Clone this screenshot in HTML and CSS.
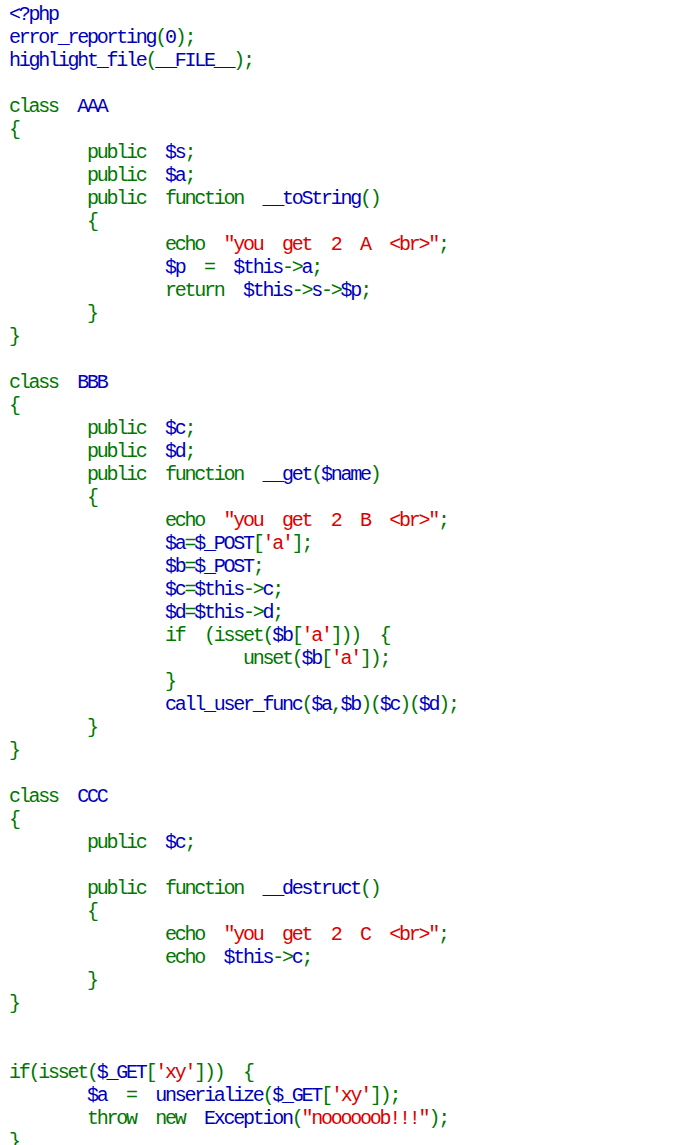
FILE: index.html
```html
<!DOCTYPE html>
<html>
<head>
<meta charset="utf-8">
<link rel="stylesheet" href="styles.css">
</head>
<body>
<pre class="code"><span class="d">&lt;?php</span>
<span class="d">error_reporting</span><span class="k">(</span><span class="d">0</span><span class="k">);</span>
<span class="d">highlight_file</span><span class="k">(</span><span class="d">__FILE__</span><span class="k">);</span>

<span class="k">class  </span><span class="d">AAA</span>
<span class="k">{</span>
<span class="k">        public  </span><span class="d">$s</span><span class="k">;</span>
<span class="k">        public  </span><span class="d">$a</span><span class="k">;</span>
<span class="k">        public  function  </span><span class="d">__toString</span><span class="k">()</span>
<span class="k">        {</span>
<span class="k">                echo  </span><span class="s">"you  get  2  A  &lt;br&gt;"</span><span class="k">;</span>
<span class="d">                $p  </span><span class="k">=  </span><span class="d">$this</span><span class="k">-&gt;</span><span class="d">a</span><span class="k">;</span>
<span class="k">                return  </span><span class="d">$this</span><span class="k">-&gt;</span><span class="d">s</span><span class="k">-&gt;</span><span class="d">$p</span><span class="k">;</span>
<span class="k">        }</span>
<span class="k">}</span>

<span class="k">class  </span><span class="d">BBB</span>
<span class="k">{</span>
<span class="k">        public  </span><span class="d">$c</span><span class="k">;</span>
<span class="k">        public  </span><span class="d">$d</span><span class="k">;</span>
<span class="k">        public  function  </span><span class="d">__get</span><span class="k">(</span><span class="d">$name</span><span class="k">)</span>
<span class="k">        {</span>
<span class="k">                echo  </span><span class="s">"you  get  2  B  &lt;br&gt;"</span><span class="k">;</span>
<span class="d">                $a</span><span class="k">=</span><span class="d">$_POST</span><span class="k">[</span><span class="s">'a'</span><span class="k">];</span>
<span class="d">                $b</span><span class="k">=</span><span class="d">$_POST</span><span class="k">;</span>
<span class="d">                $c</span><span class="k">=</span><span class="d">$this</span><span class="k">-&gt;</span><span class="d">c</span><span class="k">;</span>
<span class="d">                $d</span><span class="k">=</span><span class="d">$this</span><span class="k">-&gt;</span><span class="d">d</span><span class="k">;</span>
<span class="k">                if  (isset(</span><span class="d">$b</span><span class="k">[</span><span class="s">'a'</span><span class="k">]))  {</span>
<span class="k">                        unset(</span><span class="d">$b</span><span class="k">[</span><span class="s">'a'</span><span class="k">]);</span>
<span class="k">                }</span>
<span class="d">                call_user_func</span><span class="k">(</span><span class="d">$a</span><span class="k">,</span><span class="d">$b</span><span class="k">)(</span><span class="d">$c</span><span class="k">)(</span><span class="d">$d</span><span class="k">);</span>
<span class="k">        }</span>
<span class="k">}</span>

<span class="k">class  </span><span class="d">CCC</span>
<span class="k">{</span>
<span class="k">        public  </span><span class="d">$c</span><span class="k">;</span>

<span class="k">        public  function  </span><span class="d">__destruct</span><span class="k">()</span>
<span class="k">        {</span>
<span class="k">                echo  </span><span class="s">"you  get  2  C  &lt;br&gt;"</span><span class="k">;</span>
<span class="k">                echo  </span><span class="d">$this</span><span class="k">-&gt;</span><span class="d">c</span><span class="k">;</span>
<span class="k">        }</span>
<span class="k">}</span>


<span class="k">if(isset(</span><span class="d">$_GET</span><span class="k">[</span><span class="s">'xy'</span><span class="k">]))  {</span>
<span class="d">        $a  </span><span class="k">=  </span><span class="d">unserialize</span><span class="k">(</span><span class="d">$_GET</span><span class="k">[</span><span class="s">'xy'</span><span class="k">]);</span>
<span class="k">        throw  new  </span><span class="d">Exception</span><span class="k">(</span><span class="s">"noooooob!!!"</span><span class="k">);</span>
<span class="k">}</span></pre>
</body>
</html>
```

FILE: styles.css
```css
html, body {
  margin: 0;
  padding: 0;
  background: #ffffff;
}

body {
  padding: 3px 0 0 9px;
}

.code {
  margin: 0;
  font-family: "Liberation Mono", "DejaVu Sans Mono", monospace;
  font-size: 20px;
  letter-spacing: -2.25px;
  line-height: 23px;
  white-space: pre;
  color: #000000;
}

.d { color: #0000BB; }
.k { color: #007700; }
.s { color: #DD0000; }
```
